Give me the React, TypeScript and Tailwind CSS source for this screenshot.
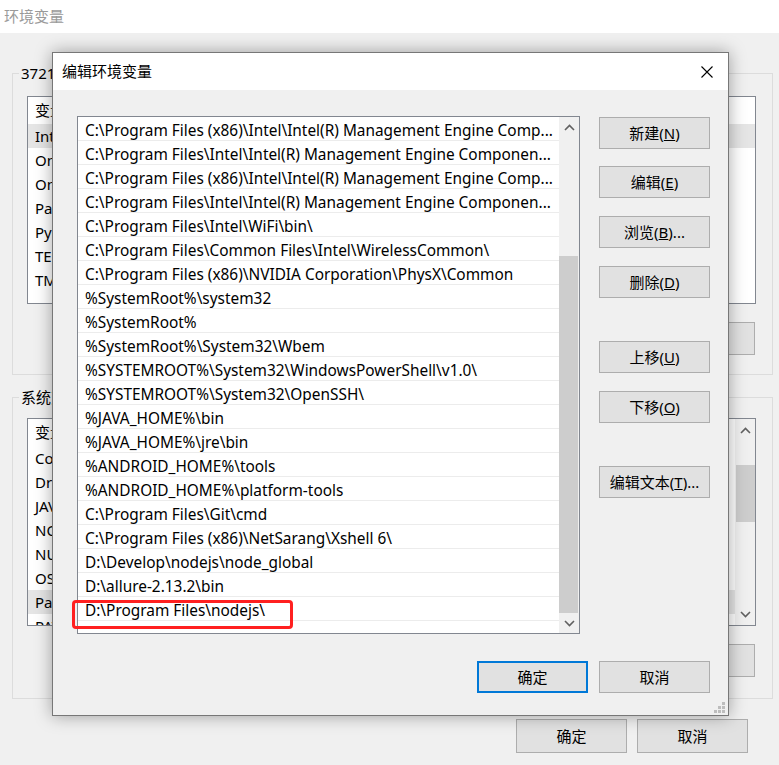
import React from 'react';

const paths = [
  'C:\\Program Files (x86)\\Intel\\Intel(R) Management Engine Comp...',
  'C:\\Program Files\\Intel\\Intel(R) Management Engine Componen...',
  'C:\\Program Files (x86)\\Intel\\Intel(R) Management Engine Comp...',
  'C:\\Program Files\\Intel\\Intel(R) Management Engine Componen...',
  'C:\\Program Files\\Intel\\WiFi\\bin\\',
  'C:\\Program Files\\Common Files\\Intel\\WirelessCommon\\',
  'C:\\Program Files (x86)\\NVIDIA Corporation\\PhysX\\Common',
  '%SystemRoot%\\system32',
  '%SystemRoot%',
  '%SystemRoot%\\System32\\Wbem',
  '%SYSTEMROOT%\\System32\\WindowsPowerShell\\v1.0\\',
  '%SYSTEMROOT%\\System32\\OpenSSH\\',
  '%JAVA_HOME%\\bin',
  '%JAVA_HOME%\\jre\\bin',
  '%ANDROID_HOME%\\tools',
  '%ANDROID_HOME%\\platform-tools',
  'C:\\Program Files\\Git\\cmd',
  'C:\\Program Files (x86)\\NetSarang\\Xshell 6\\',
  'D:\\Develop\\nodejs\\node_global',
  'D:\\allure-2.13.2\\bin',
  'D:\\Program Files\\nodejs\\',
];

const userVars = ['IntelliJ IDEA', 'OneDrive', 'OneDriveConsumer', 'Path', 'PyCharm', 'TEMP', 'TMP'];
const sysVars = ['ComSpec', 'DriverData', 'JAVA_HOME', 'NODE_PATH', 'NUMBER_OF_PROCESSORS', 'OS', 'Path', 'PATHEXT'];

function Chevron({ down }: { down?: boolean }) {
  return (
    <svg width="11" height="7" viewBox="0 0 11 7" className={down ? 'rotate-180' : ''}>
      <path d="M1 6 L5.5 1.5 L10 6" fill="none" stroke="#606060" strokeWidth="1.6" />
    </svg>
  );
}

function Btn({
  children,
  className = '',
  primary,
}: {
  children: React.ReactNode;
  className?: string;
  primary?: boolean;
}) {
  return (
    <div
      className={`flex h-[32px] w-[111px] items-center justify-center bg-[#e1e1e1] text-[15px] ${
        primary ? 'border-2 border-[#0078d7]' : 'border border-[#adadad]'
      } ${className}`}
    >
      {children}
    </div>
  );
}

function BgList({ rows, selected, scroll }: { rows: string[]; selected: number; scroll?: boolean }) {
  return (
    <div className="ml-[14px] flex h-[208px] w-[729px] overflow-hidden border border-[#828790] bg-white">
      <div className="flex-1">
        <div className="flex h-[27px] items-center pl-[7px]">
          <span className="w-[150px]">变量</span>
          <span>值</span>
        </div>
        {rows.map((r, i) => (
          <div key={i} className={`flex h-[24px] items-center pl-[7px] ${i === selected ? 'bg-[#e5e5e5]' : ''}`}>
            {r}
          </div>
        ))}
      </div>
      {scroll && (
        <div className="flex w-[20px] flex-col items-center bg-[#f0f0f0]">
          <div className="flex h-[22px] items-center">
            <Chevron />
          </div>
          <div className="mt-[24px] h-[57px] w-[19px] bg-[#cdcdcd]" />
          <div className="flex-1" />
          <div className="flex h-[22px] items-center">
            <Chevron down />
          </div>
        </div>
      )}
    </div>
  );
}

function BgButtons() {
  return (
    <div className="mt-[18px] flex justify-end gap-[10px] pr-[17px]">
      <div className="h-[33px] w-[111px] border border-[#adadad] bg-[#e1e1e1]" />
      <div className="h-[33px] w-[111px] border border-[#adadad] bg-[#e1e1e1]" />
      <div className="h-[33px] w-[111px] border border-[#adadad] bg-[#e1e1e1]" />
    </div>
  );
}

export default function App() {
  return (
    <div className="relative h-[765px] w-[779px] overflow-hidden bg-[#f0f0f0] font-['Noto_Sans','Noto_Sans_CJK_SC',sans-serif] text-[15px] text-black">
      {/* background window */}
      <div className="flex h-[33px] items-center bg-white pl-[4px] text-[#9a9a9a]">环境变量</div>
      <div className="px-[12px]">
        <div className="relative mt-[40px] h-[302px] w-[761px] border border-[#dcdcdc]">
          <span className="absolute -top-[12px] left-[6px] bg-[#f0f0f0] px-[2px]">3721 的用户变量(U)</span>
          <div className="pt-[22px]">
            <BgList rows={userVars} selected={0} />
          </div>
          <BgButtons />
        </div>
        <div className="relative mt-[22px] h-[302px] w-[761px] border border-[#dcdcdc]">
          <span className="absolute -top-[12px] left-[6px] bg-[#f0f0f0] px-[2px]">系统变量(S)</span>
          <div className="pt-[20px]">
            <BgList rows={sysVars} selected={6} scroll />
          </div>
          <BgButtons />
        </div>
      </div>
      <div className="mt-[20px] flex justify-end gap-[10px] pr-[31px]">
        <Btn className="h-[34px]">确定</Btn>
        <Btn className="h-[34px]">取消</Btn>
      </div>

      {/* edit dialog */}
      <div className="absolute left-[52px] top-[52px] flex h-[664px] w-[677px] flex-col border border-[#777] bg-[#f0f0f0] shadow-[0_0_16px_rgba(0,0,0,0.35)]">
        <div className="flex h-[37px] items-center justify-between bg-white pl-[9px] pr-[15px]">
          <span>编辑环境变量</span>
          <svg width="12" height="12" viewBox="0 0 12 12">
            <path d="M0.5 0.5 L11.5 11.5 M11.5 0.5 L0.5 11.5" stroke="#000" strokeWidth="1.1" />
          </svg>
        </div>
        <div className="flex pl-[24px] pt-[26px]">
          <div className="flex h-[518px] w-[503px] border border-[#828790] bg-white">
            <div className="flex-1 text-[15.4px]">
              {paths.map((p, i) => (
                <div
                  key={i}
                  className="flex h-[24px] items-center whitespace-nowrap border-b border-[#ececec] pl-[7px] pt-[4px]"
                >
                  {p}
                </div>
              ))}
            </div>
            <div className="flex w-[20px] flex-col bg-[#f0f0f0]">
              <div className="flex h-[21px] items-center justify-center">
                <Chevron />
              </div>
              <div className="mt-[118px] h-[357px] w-[19px] bg-[#cdcdcd]" />
              <div className="flex flex-1 items-center justify-center">
                <Chevron down />
              </div>
            </div>
          </div>
          <div className="ml-[19px] flex flex-col pt-[1px]">
            <Btn>
              新建(<u>N</u>)
            </Btn>
            <Btn className="mt-[17px]">
              编辑(<u>E</u>)
            </Btn>
            <Btn className="mt-[18px]">
              浏览(<u>B</u>)...
            </Btn>
            <Btn className="mt-[18px]">
              删除(<u>D</u>)
            </Btn>
            <Btn className="mt-[43px]">
              上移(<u>U</u>)
            </Btn>
            <Btn className="mt-[18px]">
              下移(<u>O</u>)
            </Btn>
            <Btn className="mt-[43px]">
              编辑文本(<u>T</u>)...
            </Btn>
          </div>
        </div>
        <div className="mt-[27px] flex gap-[11px] pl-[424px]">
          <Btn primary>确定</Btn>
          <Btn>取消</Btn>
        </div>
        <div className="flex flex-1 items-end justify-end pb-[1px] pr-[2px]">
          <svg width="12" height="12" viewBox="0 0 12 12">
            <rect x="8" y="0" width="3" height="3" fill="#bdbdbd" />
            <rect x="4" y="4" width="3" height="3" fill="#bdbdbd" />
            <rect x="8" y="4" width="3" height="3" fill="#bdbdbd" />
            <rect x="0" y="8" width="3" height="3" fill="#bdbdbd" />
            <rect x="4" y="8" width="3" height="3" fill="#bdbdbd" />
            <rect x="8" y="8" width="3" height="3" fill="#bdbdbd" />
          </svg>
        </div>
        {/* highlight around the new entry */}
        <div className="absolute left-[19px] top-[547px] h-[29px] w-[221px] rounded-[4px] border-[3px] border-[#ff2020]" />
      </div>
    </div>
  );
}
